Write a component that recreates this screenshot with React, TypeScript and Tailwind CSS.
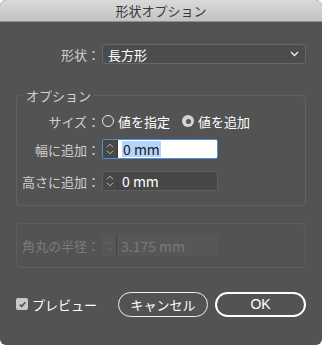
import React from "react";

const font = { fontFamily: '"Noto Sans CJK JP", "Noto Sans", sans-serif' };

function Stepper({ dim }: { dim?: boolean }) {
  const c = dim ? "#6e6e6e" : "#c8c8c8";
  return (
    <svg width="16" height="18" viewBox="0 0 16 18">
      <path d="M4.5 7 L8 3.5 L11.5 7" fill="none" stroke={c} strokeWidth="1" />
      <path d="M4.5 11 L8 14.5 L11.5 11" fill="none" stroke={c} strokeWidth="1" />
    </svg>
  );
}

export default function App() {
  return (
    <div className="w-[322px] h-[345px] bg-white" style={font}>
      <div className="w-[322px] h-[345px] rounded-[6px] overflow-hidden flex flex-col bg-[#535353]">
        <div className="h-[22px] shrink-0 bg-gradient-to-b from-[#dadada] to-[#c3c3c3] border-b border-[#8f8f8f] flex items-center justify-center text-[13px] text-[#3a3a3a] leading-none">
          形状オプション
        </div>

        {/* 形状 row */}
        <div className="mt-[22px] flex items-center h-[20px]">
          <div className="w-[100px] text-right text-[13px] text-[#cfcfcf] leading-none">形状：</div>
          <div className="ml-[2px] w-[204px] h-[20px] rounded-[3px] border border-[#686868] bg-[#4c4c4c] flex items-center justify-between pl-[5px] pr-[6px]">
            <span className="text-[13px] text-white leading-none">長方形</span>
            <svg width="9" height="6" viewBox="0 0 9 6">
              <path d="M1 1 L4.5 4.5 L8 1" fill="none" stroke="#e8e8e8" strokeWidth="1.4" />
            </svg>
          </div>
        </div>

        {/* Option group */}
        <fieldset className="mt-[25px] ml-[16px] w-[290px] h-[117px] border border-[#626262] rounded-[4px] pt-[12px] pl-0 pr-0 m-0 relative">
          <legend className="ml-[6px] px-[3px] text-[13px] text-[#d2d2d2] leading-none">オプション</legend>
          <div className="flex items-center h-[16px] mt-[-1px]">
            <div className="w-[83px] text-right text-[13px] text-[#cfcfcf] leading-none">サイズ：</div>
            <div className="ml-[2px] flex items-center">
              <span className="w-[12px] h-[12px] rounded-full border border-[#e8e8e8] box-border" />
              <span className="ml-[4px] text-[13px] text-white leading-none">値を指定</span>
              <span className="ml-[12px] w-[12px] h-[12px] rounded-full bg-[#d4d4d4] flex items-center justify-center">
                <span className="w-[5px] h-[5px] rounded-full bg-[#555]" />
              </span>
              <span className="ml-[4px] text-[13px] text-white leading-none">値を追加</span>
            </div>
          </div>

          <div className="flex items-center h-[20px] mt-[10px]">
            <div className="w-[83px] text-right text-[13px] text-[#cfcfcf] leading-none">幅に追加：</div>
            <div className="ml-[2px] w-[116px] h-[20px] rounded-[2px] border border-[#4d8fd6] flex overflow-hidden">
              <div className="w-[15px] bg-[#474747] flex items-center justify-center border-r border-[#3a3a3a]">
                <Stepper />
              </div>
              <div className="flex-1 bg-white flex items-center pl-[4px]">
                <span className="bg-[#b4d5fb] text-[14px] text-[#222] leading-[16px] px-[1px]">0 mm</span>
              </div>
            </div>
          </div>

          <div className="flex items-center h-[20px] mt-[12px]">
            <div className="w-[83px] text-right text-[13px] text-[#cfcfcf] leading-none">高さに追加：</div>
            <div className="ml-[2px] w-[116px] h-[20px] rounded-[2px] border border-[#5e5e5e] flex overflow-hidden bg-[#474747]">
              <div className="w-[15px] flex items-center justify-center border-r border-[#3d3d3d]">
                <Stepper />
              </div>
              <div className="flex-1 flex items-center pl-[4px]">
                <span className="text-[14px] text-white leading-none">0 mm</span>
              </div>
            </div>
          </div>
        </fieldset>

        {/* Disabled group */}
        <div className="mt-[17px] ml-[16px] w-[290px] h-[45px] border border-[#5e5e5e] rounded-[4px] flex items-center">
          <div className="w-[83px] text-right text-[13px] text-[#7c7c7c] leading-none">角丸の半径：</div>
          <div className="ml-[2px] w-[116px] h-[21px] flex bg-[#575757]">
            <div className="w-[15px] flex items-center justify-center border-r border-[#444]">
              <Stepper dim />
            </div>
            <div className="flex-1 flex items-center pl-[4px]">
              <span className="text-[14px] text-[#7a7a7a] leading-none">3.175 mm</span>
            </div>
          </div>
        </div>

        {/* Bottom row */}
        <div className="mt-[23px] flex items-center h-[26px]">
          <div className="ml-[16px] w-[12px] h-[12px] rounded-[2px] bg-[#c9c9c9] flex items-center justify-center">
            <svg width="9" height="9" viewBox="0 0 9 9">
              <path d="M1.8 4.6 L3.7 6.5 L7.3 2.3" fill="none" stroke="#4a4a4a" strokeWidth="1.5" />
            </svg>
          </div>
          <span className="ml-[4px] text-[13px] text-white leading-none">プレビュー</span>
          <button className="ml-[21px] w-[90px] h-[25px] rounded-full border-[1.5px] border-[#f0f0f0] text-[13px] text-white leading-none flex items-center justify-center">
            キャンセル
          </button>
          <button className="ml-[7px] w-[91px] h-[25px] rounded-full border-2 border-white text-[14px] text-white leading-none flex items-center justify-center" style={{ fontFamily: '"Liberation Sans", Arial, sans-serif' }}>
            OK
          </button>
        </div>
      </div>
    </div>
  );
}
